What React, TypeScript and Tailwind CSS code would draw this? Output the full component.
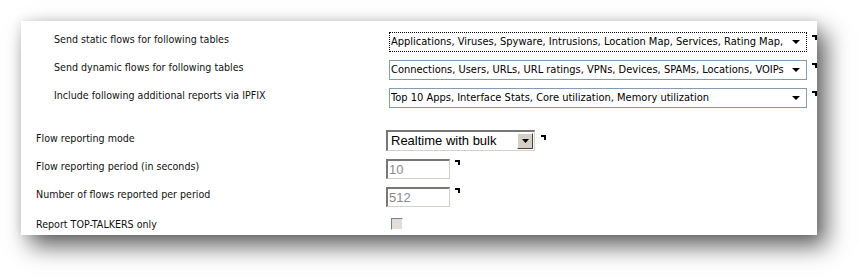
const tahoma = { fontFamily: '"DejaVu Sans Condensed", "Liberation Sans", sans-serif' };
const arial = { fontFamily: '"Liberation Sans", Arial, sans-serif' };

function Marker() {
  return (
    <svg width="5" height="5" viewBox="0 0 5 5" className="shrink-0">
      <polygon points="0,0 5,0 5,5 3,5 3,2 0,2" fill="#000" />
    </svg>
  );
}

function DownTri() {
  return (
    <svg width="8" height="4" viewBox="0 0 8 4" className="shrink-0">
      <polygon points="0,0 8,0 4,4" fill="#000" />
    </svg>
  );
}

function ListSelect({ text, focused }: { text: string; focused?: boolean }) {
  return (
    <div className="flex items-start gap-[5px]">
      <div
        className={
          'flex h-[20px] w-[418px] items-center justify-between gap-2 bg-white pl-[1px] pr-[6px] ' +
          (focused ? 'border border-dotted border-black' : 'border border-[#7f9db9]')
        }
      >
        <span className="min-w-0 overflow-hidden whitespace-nowrap text-[11px] text-black" style={tahoma}>
          {text}
        </span>
        <DownTri />
      </div>
      <div className="pt-[3px]">
        <Marker />
      </div>
    </div>
  );
}

const topRows = [
  {
    label: 'Send static flows for following tables',
    value: 'Applications, Viruses, Spyware, Intrusions, Location Map, Services, Rating Map,',
    focused: true,
  },
  {
    label: 'Send dynamic flows for following tables',
    value: 'Connections, Users, URLs, URL ratings, VPNs, Devices, SPAMs, Locations, VOIPs',
  },
  {
    label: 'Include following additional reports via IPFIX',
    value: 'Top 10 Apps, Interface Stats, Core utilization, Memory utilization',
  },
];

function Sunken({ children, className }: { children: React.ReactNode; className: string }) {
  return (
    <div
      className={
        'border-t-2 border-l-2 border-b border-r border-t-[#777] border-l-[#777] border-b-[#d4d0c8] border-r-[#d4d0c8] bg-white ' +
        className
      }
    >
      {children}
    </div>
  );
}

export default function App() {
  return (
    <div className="h-[277px] w-[859px] overflow-hidden bg-white pl-[21px] pt-[21px]">
      <div className="h-[214px] w-[796px] bg-white shadow-[9px_11px_22px_rgba(0,0,0,0.62),0_0_10px_rgba(0,0,0,0.1)]">
        <div className="flex flex-col gap-[8px] pt-[11px]">
          {topRows.map((r) => (
            <div key={r.label} className="flex items-start">
              <div
                className="w-[368px] pl-[33px] text-[10.6px] leading-[14px] text-[#111]"
                style={tahoma}
              >
                {r.label}
              </div>
              <ListSelect text={r.value} focused={r.focused} />
            </div>
          ))}
        </div>

        <div className="mt-[22px] flex flex-col">
          <div className="flex h-[29px] items-start">
            <div className="w-[365px] pl-[15px] pt-[1px] text-[10.6px] leading-[14px] text-[#111]" style={tahoma}>
              Flow reporting mode
            </div>
            <div className="flex items-start gap-[6px]">
              <Sunken className="flex h-[21px] w-[149px] items-center justify-between pl-[3px] pr-[1px]">
                <span className="text-[13px] text-black" style={arial}>
                  Realtime with bulk
                </span>
                <div className="flex h-[16px] w-[16px] items-center justify-center border-t border-l border-b border-r border-t-white border-l-white border-b-[#404040] border-r-[#404040] bg-[#d4d0c8]">
                  <svg width="7" height="4" viewBox="0 0 7 4">
                    <polygon points="0,0 7,0 3.5,4" fill="#000" />
                  </svg>
                </div>
              </Sunken>
              <div className="pt-[5px]">
                <Marker />
              </div>
            </div>
          </div>

          {[
            { label: 'Flow reporting period (in seconds)', value: '10' },
            { label: 'Number of flows reported per period', value: '512' },
          ].map((r) => (
            <div key={r.label} className="flex h-[28px] items-start">
              <div className="w-[365px] pl-[15px] text-[10.6px] leading-[14px] text-[#111]" style={tahoma}>
                {r.label}
              </div>
              <div className="flex items-start gap-[5px]">
                <Sunken className="flex h-[20px] w-[64px] items-center pl-[1px]">
                  <span className="text-[13px] text-[#8a8a8a]" style={arial}>
                    {r.value}
                  </span>
                </Sunken>
                <div className="pt-[1px]">
                  <Marker />
                </div>
              </div>
            </div>
          ))}

          <div className="flex items-start">
            <div className="w-[370px] pl-[15px] pt-[2px] text-[10.6px] leading-[14px] text-[#111]" style={tahoma}>
              Report TOP-TALKERS only
            </div>
            <div className="mt-[3px] h-[12px] w-[12px] border-t border-l border-b border-r border-t-[#808080] border-l-[#808080] border-b-white border-r-white bg-[#e0ded6]" />
          </div>
        </div>
      </div>
    </div>
  );
}
